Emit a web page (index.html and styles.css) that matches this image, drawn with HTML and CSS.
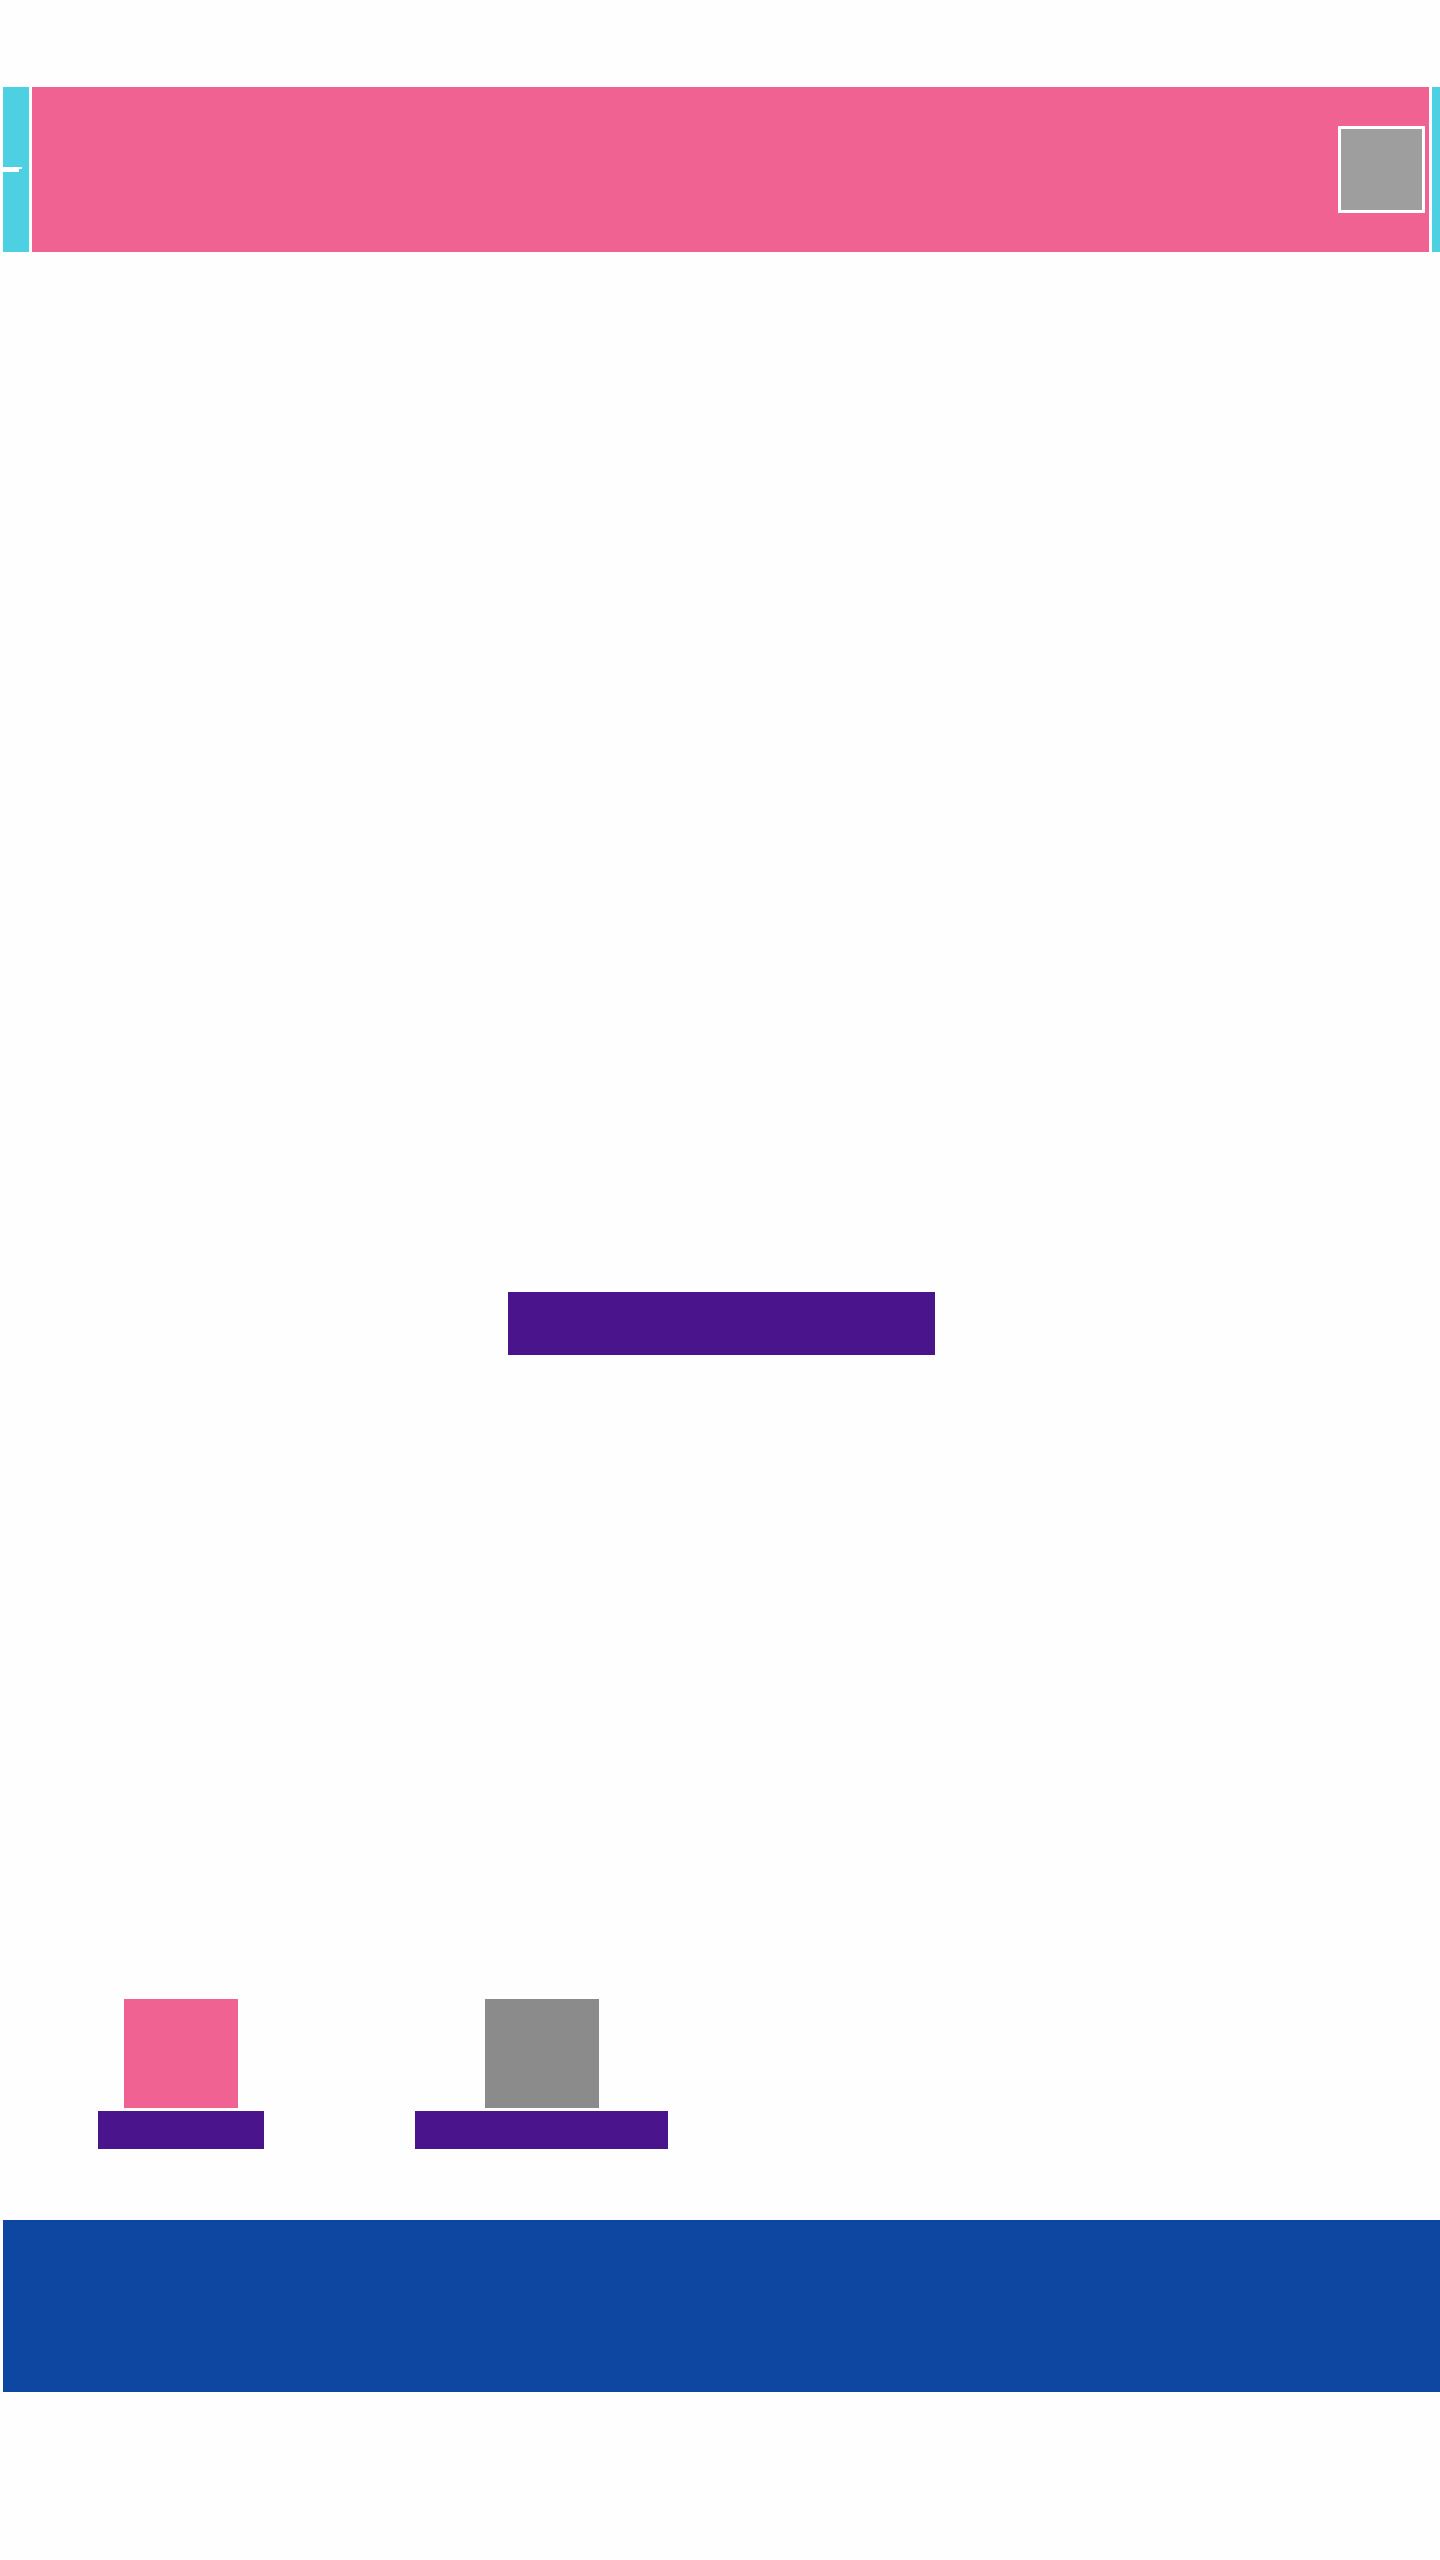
FILE: index.html
```html
<!DOCTYPE html>
<html lang="en">
<head>
<meta charset="utf-8">
<title>Page</title>
<link rel="stylesheet" href="styles.css">
</head>
<body>
<div class="page">
  <header class="header">
    <div class="side-left"><span class="mark"><span class="mark-top"></span><span class="mark-bottom"></span></span></div>
    <div class="banner">
      <div class="avatar"><div class="avatar-inner"></div></div>
    </div>
    <div class="side-right"></div>
  </header>
  <main class="main">
    <div class="cta-row"><a class="cta" href="#"></a></div>
    <div class="cards">
      <div class="card card-one">
        <div class="thumb thumb-pink"></div>
        <div class="label"></div>
      </div>
      <div class="card card-two">
        <div class="thumb thumb-gray"></div>
        <div class="label"></div>
      </div>
    </div>
  </main>
  <footer class="footer"></footer>
</div>
</body>
</html>
```

FILE: styles.css
```css
html, body {
  margin: 0;
  padding: 0;
  background: #fefefe;
  font-family: "Liberation Sans", Arial, sans-serif;
}

.page {
  padding-top: 87px;
  padding-left: 3px;
}

.header {
  display: flex;
  height: 165px;
  gap: 3px;
}

.side-left {
  width: 26px;
  background: #4dd0e1;
  display: flex;
  flex-direction: column;
  justify-content: flex-start;
  padding-top: 80px;
  box-sizing: border-box;
}

.mark {
  display: flex;
  flex-direction: column;
}

.mark-top {
  display: block;
  width: 19px;
  height: 2px;
  background: #ffffff;
}

.mark-bottom {
  display: block;
  width: 16px;
  height: 3px;
  background: #ffffff;
}

.banner {
  flex: 1;
  background: #f06292;
  display: flex;
  justify-content: flex-end;
  align-items: flex-start;
  padding-top: 39px;
  padding-right: 4px;
  box-sizing: border-box;
}

.avatar {
  width: 87px;
  height: 87px;
  background: #ffffff;
  padding: 3px;
  box-sizing: border-box;
}

.avatar-inner {
  width: 100%;
  height: 100%;
  background: #9e9e9e;
}

.side-right {
  width: 8px;
  background: #4dd0e1;
}

.main {
  display: flex;
  flex-direction: column;
}

.cta-row {
  display: flex;
  justify-content: center;
  padding-top: 1040px;
}

.cta {
  display: block;
  width: 427px;
  height: 63px;
  background: #4a148c;
}

.cards {
  display: flex;
  gap: 151px;
  padding-top: 644px;
  padding-left: 95px;
}

.card {
  display: flex;
  flex-direction: column;
  align-items: center;
  gap: 3px;
}

.card-one {
  width: 166px;
}

.card-two {
  width: 253px;
}

.thumb {
  width: 114px;
  height: 109px;
}

.thumb-pink {
  background: #f06292;
}

.thumb-gray {
  background: #8b8b8b;
}

.label {
  width: 100%;
  height: 38px;
  background: #4a148c;
}

.footer {
  margin-top: 71px;
  height: 172px;
  background: #0d47a1;
}
```
